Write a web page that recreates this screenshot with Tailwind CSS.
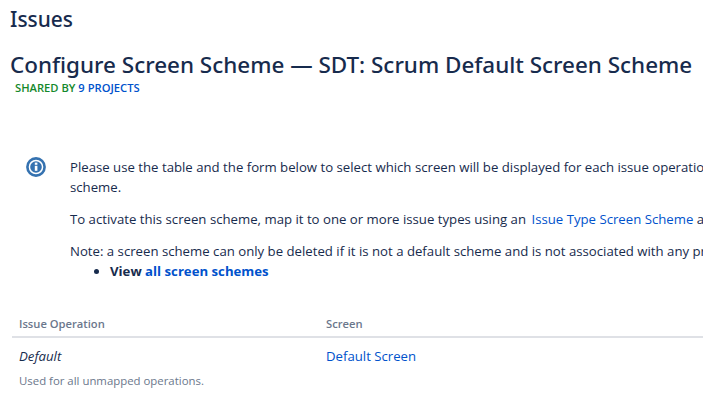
<!DOCTYPE html>
<html lang="en">
<head>
  <meta charset="UTF-8" />
  <title>Configure Screen Scheme</title>
  <script src="https://cdn.jsdelivr.net/npm/@tailwindcss/browser@4"></script>
</head>
<body class="h-[403px] w-[703px] overflow-hidden bg-white font-['Open_Sans','Noto_Sans',sans-serif] text-[13.2px] text-[#172b4d]">
  <main class="w-[1000px] pl-[10px]">
    <!-- Header -->
    <h1 class="h-[38px] pt-[5px] font-['Noto_Sans',sans-serif] text-[20.9px] font-medium leading-[28px] text-[#172b4d]">Issues</h1>
    <h2 class="mt-[11px] h-[32px] font-['Noto_Sans',sans-serif] text-[22.45px] font-medium leading-[32px] text-[#172b4d]">Configure Screen Scheme — SDT: Scrum Default Screen Scheme</h2>
    <p class="ml-[5px] text-[11.2px] font-semibold leading-[14px] text-[#14892c]">SHARED BY <a href="#" class="text-[#0052cc]">9 PROJECTS</a></p>

    <!-- Info -->
    <section class="mt-[62px] flex">
      <div class="w-[60px] pl-[16px]">
        <svg width="20" height="20" viewBox="0 0 20 20" aria-hidden="true">
          <circle cx="10" cy="10" r="8.6" fill="none" stroke="#3572b0" stroke-width="2.6" />
          <circle cx="10" cy="10" r="5.8" fill="#3572b0" />
          <rect x="8.8" y="8.8" width="2.6" height="5" fill="#fff" />
          <rect x="8.8" y="5.6" width="2.6" height="2.2" fill="#fff" />
        </svg>
      </div>
      <div class="w-[860px] leading-[20px]">
        <p>Please use the table and the form below to select which screen will be displayed for each issue operation. You can add entries for this<br />scheme.</p>
        <p class="mt-[12px]">To activate this screen scheme, map it to one or more issue types using an <a href="#" class="ml-[2px] text-[#0052cc]">Issue Type Screen Scheme</a> and associate it with a project.</p>
        <p class="mt-[12px]">Note: a screen scheme can only be deleted if it is not a default scheme and is not associated with any projects.</p>
        <ul class="list-disc pl-[40px]">
          <li class="font-bold">View <a href="#" class="text-[#0052cc]">all screen schemes</a></li>
        </ul>
      </div>
    </section>

    <!-- Table -->
    <table class="mt-[34px] ml-[2px] w-[988px] border-collapse text-left">
      <thead>
        <tr class="border-b-2 border-[#dfe1e6] text-[11.2px] text-[#6b778c]">
          <th class="w-[307px] px-[7px] pb-[3px] font-semibold leading-[18px]">Issue Operation</th>
          <th class="px-[7px] pb-[3px] font-semibold leading-[18px]">Screen</th>
        </tr>
      </thead>
      <tbody>
        <tr>
          <td class="px-[7px] pt-[8px] align-top">
            <em class="leading-[20px]">Default</em>
            <div class="mt-[6px] text-[11.4px] leading-[16px] text-[#6b778c]">Used for all unmapped operations.</div>
          </td>
          <td class="px-[7px] pt-[8px] align-top leading-[20px]"><a href="#" class="text-[#0052cc]">Default Screen</a></td>
        </tr>
      </tbody>
    </table>
  </main>
</body>
</html>
